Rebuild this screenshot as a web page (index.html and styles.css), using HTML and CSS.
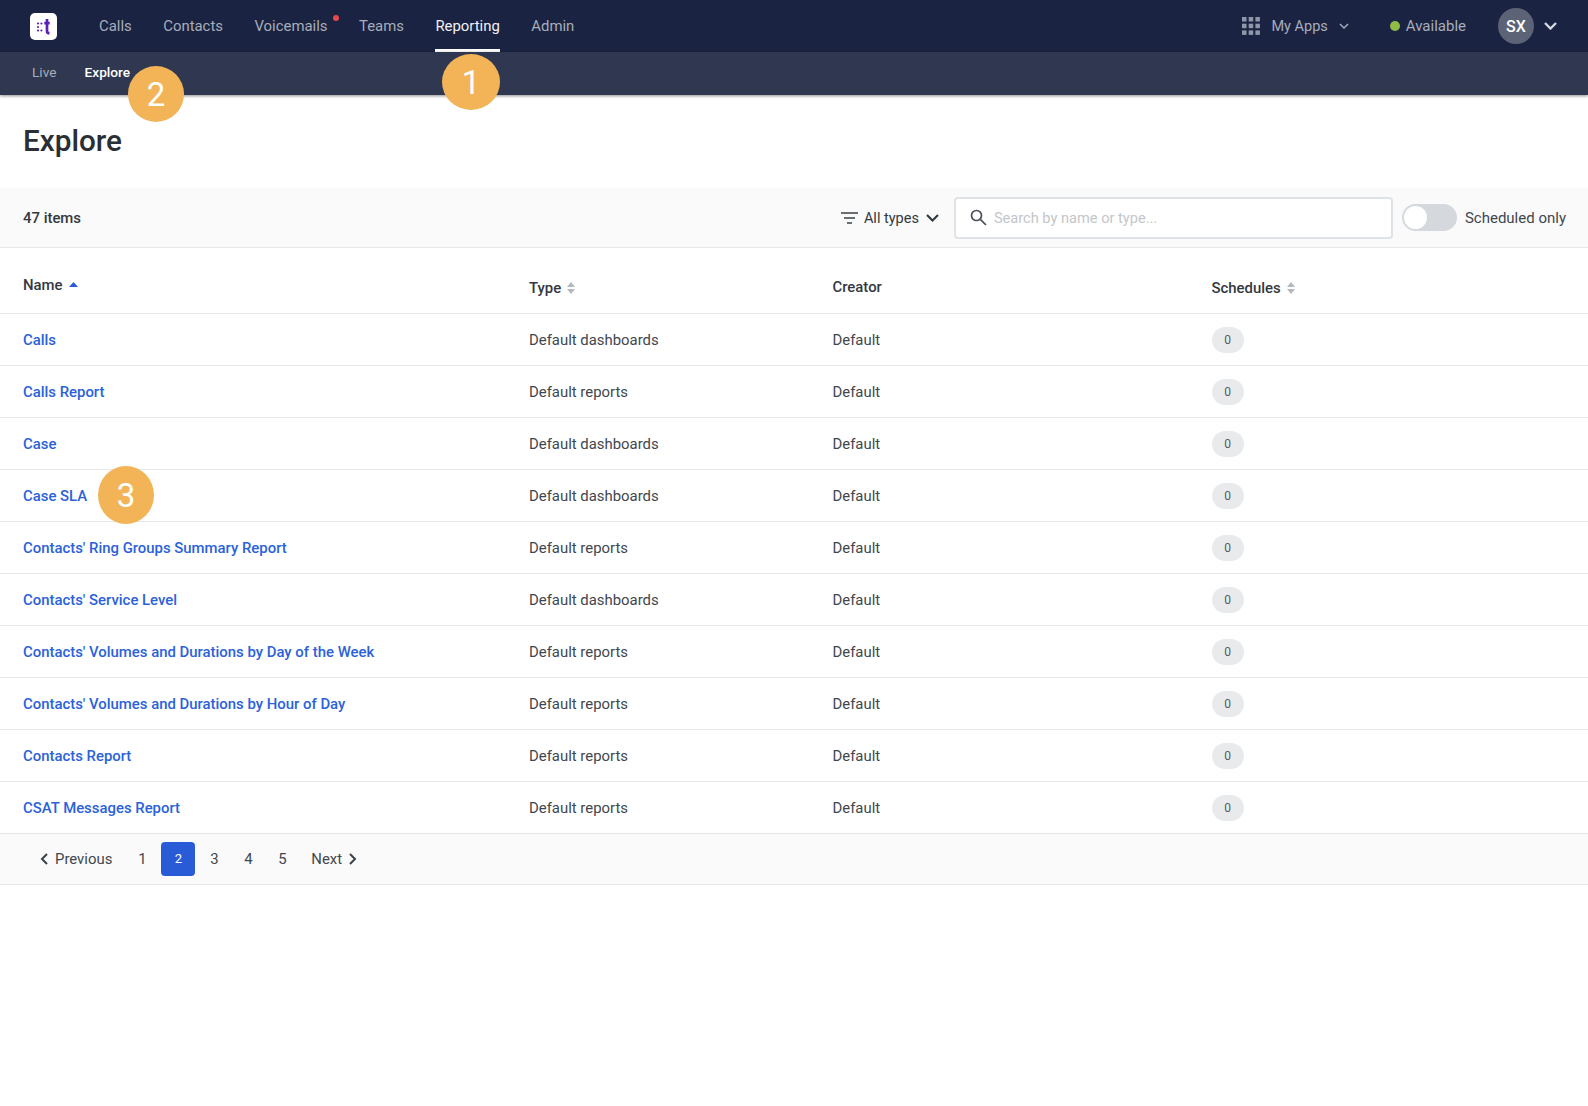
FILE: index.html
```html
<!DOCTYPE html>
<html lang="en">
<head>
<meta charset="utf-8">
<title>Explore</title>
<link rel="stylesheet" href="styles.css">
</head>
<body>
<header class="topbar">
  <div class="logo"><svg width="27" height="27" viewBox="0 0 27 27" aria-hidden="true"><g fill="#5b21b6"><circle cx="8" cy="10.5" r="1.1"/><circle cx="8" cy="14" r="1.1"/><circle cx="8" cy="17.5" r="1.1"/><circle cx="11.4" cy="10.5" r="1.1"/><circle cx="11.4" cy="17.5" r="1.1"/></g><path d="M17 6v12.2q0 2 2.5 2M14.3 10.2h5.4" fill="none" stroke="#5b21b6" stroke-width="2.7"/></svg></div>
  <nav class="mainnav">
    <a>Calls</a><a>Contacts</a><a class="has-dot">Voicemails</a><a>Teams</a><a class="active">Reporting</a><a>Admin</a>
  </nav>
  <div class="top-right">
    <svg class="grid-icon" width="18" height="18" viewBox="0 0 18 18" fill="#8f96a8"><rect x="0" y="0" width="4.5" height="4.5"/><rect x="6.7" y="0" width="4.5" height="4.5"/><rect x="13.4" y="0" width="4.5" height="4.5"/><rect x="0" y="6.7" width="4.5" height="4.5"/><rect x="6.7" y="6.7" width="4.5" height="4.5"/><rect x="13.4" y="6.7" width="4.5" height="4.5"/><rect x="0" y="13.4" width="4.5" height="4.5"/><rect x="6.7" y="13.4" width="4.5" height="4.5"/><rect x="13.4" y="13.4" width="4.5" height="4.5"/></svg>
    <span class="apps">My Apps</span>
    <svg class="apps-chev" width="10" height="6" viewBox="0 0 10 6" fill="none" stroke="#a3a9b8" stroke-width="1.5"><path d="M1 1l4 4 4-4"/></svg>
    <span class="status-dot"></span><span class="status">Available</span>
    <span class="avatar">SX</span>
    <svg class="user-chev" width="13" height="8" viewBox="0 0 13 8" fill="none" stroke="#d5d8df" stroke-width="2.4"><path d="M1 1l5.5 5.5L12 1"/></svg>
  </div>
</header>
<div class="subbar"><a>Live</a><a class="active">Explore</a></div>
<h1 class="title">Explore</h1>
<div class="toolbar">
  <span class="count">47 items</span>
  <div class="tools">
    <svg class="filter-icon" width="17" height="12" viewBox="0 0 17 12" fill="none" stroke="#3b4149" stroke-width="1.6"><path d="M0 1h17M3 6h11M6 11h5"/></svg>
    <span class="filter">All types</span>
    <svg class="filter-chev" width="13" height="8" viewBox="0 0 13 8" fill="none" stroke="#2f353c" stroke-width="2"><path d="M1 1l5.5 5.5L12 1"/></svg>
    <div class="search">
      <svg width="17" height="17" viewBox="0 0 17 17" fill="none" stroke="#4a5058" stroke-width="1.7"><circle cx="6.5" cy="6.5" r="5"/><path d="M10.3 10.3L16 16"/></svg>
      <span class="placeholder">Search by name or type...</span>
    </div>
    <span class="toggle"><span class="knob"></span></span>
    <span class="sched">Scheduled only</span>
  </div>
</div>
<div class="table">
  <div class="row head">
    <div class="c1 name-head">Name <svg width="9" height="5" viewBox="0 0 9 5" fill="#2a5bd7"><path d="M4.5 0L9 5H0z"/></svg></div>
    <div class="c2 low">Type <svg class="sort" width="8" height="12" viewBox="0 0 8 12" fill="#b4b8bd"><path d="M4 0l4 5H0zM4 12L0 7h8z"/></svg></div>
    <div class="c3 creator">Creator</div>
    <div class="c4 low">Schedules <svg class="sort" width="8" height="12" viewBox="0 0 8 12" fill="#b4b8bd"><path d="M4 0l4 5H0zM4 12L0 7h8z"/></svg></div>
  </div>
  <div class="row"><a class="c1">Calls</a><div class="c2">Default dashboards</div><div class="c3">Default</div><div class="c4"><span class="badge">0</span></div></div>
  <div class="row"><a class="c1">Calls Report</a><div class="c2">Default reports</div><div class="c3">Default</div><div class="c4"><span class="badge">0</span></div></div>
  <div class="row"><a class="c1">Case</a><div class="c2">Default dashboards</div><div class="c3">Default</div><div class="c4"><span class="badge">0</span></div></div>
  <div class="row"><a class="c1">Case SLA</a><div class="c2">Default dashboards</div><div class="c3">Default</div><div class="c4"><span class="badge">0</span></div></div>
  <div class="row"><a class="c1">Contacts' Ring Groups Summary Report</a><div class="c2">Default reports</div><div class="c3">Default</div><div class="c4"><span class="badge">0</span></div></div>
  <div class="row"><a class="c1">Contacts' Service Level</a><div class="c2">Default dashboards</div><div class="c3">Default</div><div class="c4"><span class="badge">0</span></div></div>
  <div class="row"><a class="c1">Contacts' Volumes and Durations by Day of the Week</a><div class="c2">Default reports</div><div class="c3">Default</div><div class="c4"><span class="badge">0</span></div></div>
  <div class="row"><a class="c1">Contacts' Volumes and Durations by Hour of Day</a><div class="c2">Default reports</div><div class="c3">Default</div><div class="c4"><span class="badge">0</span></div></div>
  <div class="row"><a class="c1">Contacts Report</a><div class="c2">Default reports</div><div class="c3">Default</div><div class="c4"><span class="badge">0</span></div></div>
  <div class="row"><a class="c1">CSAT Messages Report</a><div class="c2">Default reports</div><div class="c3">Default</div><div class="c4"><span class="badge">0</span></div></div>
</div>
<div class="pager">
  <a class="prev"><svg width="8" height="12" viewBox="0 0 8 12" fill="none" stroke="#3b4149" stroke-width="2"><path d="M7 1L2 6l5 5"/></svg>Previous</a>
  <a class="num">1</a><a class="num current">2</a><a class="num">3</a><a class="num">4</a><a class="num">5</a>
  <a class="next">Next<svg width="8" height="12" viewBox="0 0 8 12" fill="none" stroke="#3b4149" stroke-width="2"><path d="M1 1l5 5-5 5"/></svg></a>
</div>
<span class="marker m1">1</span>
<span class="marker m2">2</span>
<span class="marker m3">3</span>
</body>
</html>
```
FILE: styles.css
```css
* { box-sizing: border-box; }
html, body { margin: 0; padding: 0; }
body {
  position: relative;
  width: 1588px;
  height: 1106px;
  overflow: hidden;
  background: #fff;
  font-family: Roboto, "Liberation Sans", sans-serif;
  font-size: 14.9px;
  color: #41474e;
}
.topbar {
  height: 52px;
  background: #1a2342;
  display: flex;
  align-items: center;
  padding-left: 30px;
}
.logo {
  width: 27px;
  height: 27px;
  background: #fff;
  border-radius: 5px;
  display: flex;
}
.mainnav { display: flex; margin-left: 42px; height: 52px; }
.mainnav a {
  display: flex;
  align-items: center;
  height: 52px;
  margin-right: 31.5px;
  color: #a8adba;
  position: relative;
}
.mainnav a.active { color: #f1f2f5; border-bottom: 3px solid #fff; padding-top: 3px; }
.mainnav a.has-dot::after {
  content: "";
  position: absolute;
  width: 6px;
  height: 6px;
  border-radius: 50%;
  background: #e5484d;
  right: -11px;
  top: 15px;
}
.top-right { margin-left: auto; display: flex; align-items: center; padding-right: 31px; }
.apps { color: #a8adba; margin-left: 11.5px; font-size: 14.5px; }
.apps-chev { margin-left: 11px; }
.status-dot { width: 10px; height: 10px; border-radius: 50%; background: #8fbc45; margin-left: 41px; }
.status { color: #a8adba; margin-left: 6px; font-size: 15px; }
.avatar {
  width: 36px;
  height: 36px;
  border-radius: 50%;
  background: #5c6377;
  color: #fff;
  font-weight: 500;
  font-size: 16px;
  display: flex;
  align-items: center;
  justify-content: center;
  margin-left: 32px;
}
.user-chev { margin-left: 10px; }
.subbar {
  height: 43px;
  background: #2f3751;
  display: flex;
  align-items: center;
  padding: 0 0 4px 32px;
  gap: 28px;
  font-size: 13.7px;
  box-shadow: 0 1px 3px rgba(0, 0, 0, 0.45);
  position: relative;
  color: #a8adba;
}
.subbar a.active { color: #fff; font-weight: 500; }
.title {
  margin: 0;
  height: 93px;
  padding: 28px 0 0 23px;
  font-size: 29.7px;
  line-height: 36px;
  font-weight: 500;
  color: #2a2f36;
}
.toolbar {
  height: 60px;
  background: #fafafa;
  border-bottom: 1px solid #e6e7e9;
  display: flex;
  align-items: center;
  justify-content: space-between;
  padding: 0 22px 0 23px;
}
.count { font-weight: 500; color: #33383f; }
.tools { display: flex; align-items: center; }
.filter { margin-left: 6px; color: #33383f; font-size: 14.5px; padding-top: 1px; }
.filter-chev { margin-left: 7px; }
.search {
  width: 439px;
  height: 42px;
  margin-left: 15px;
  background: #fff;
  border: 2px solid #dfe3e7;
  border-radius: 4px;
  display: flex;
  align-items: center;
  padding-left: 14px;
  gap: 7px;
}
.placeholder { color: #c3c6ca; font-size: 14.6px; }
.toggle {
  width: 55px;
  height: 27px;
  margin-left: 9px;
  border-radius: 14px;
  background: #d5d8dc;
  display: flex;
  align-items: center;
  padding-left: 2px;
}
.knob { width: 23px; height: 23px; border-radius: 50%; background: #fff; }
.sched { margin-left: 8px; font-size: 15px; }
.row {
  height: 52px;
  padding-top: 1px;
  border-bottom: 1px solid #e6e7e9;
  display: flex;
  align-items: center;
  padding-left: 23px;
}
.row.head { height: 65.5px; padding-top: 15px; font-weight: 500; color: #33383f; }
.c1 { width: 506px; }
.c2 { width: 303.5px; }
.c3 { width: 379px; }
.creator { padding-bottom: 2px; }
a.c1 { color: #2b62da; font-weight: 500; }
.name-head { display: flex; align-items: center; gap: 6px; padding-bottom: 6px; }
.low { display: flex; align-items: center; gap: 6px; }
.badge {
  display: flex;
  align-items: center;
  justify-content: center;
  width: 32px;
  height: 26px;
  border-radius: 13px;
  background: #e9eaec;
  font-size: 12px;
  color: #565b62;
}
.pager {
  height: 51px;
  background: #fafafa;
  border-bottom: 1px solid #e6e7e9;
  display: flex;
  align-items: center;
  padding-left: 40px;
}
.prev, .next { display: flex; align-items: center; gap: 7px; }
.prev { margin-right: 13px; }
.num { width: 34px; height: 34px; display: flex; align-items: center; justify-content: center; }
.num.current { background: #2a5bd7; color: #fff; border-radius: 4px; font-size: 13px; margin: 0 2px; }
.next { margin-left: 12px; }
.marker {
  position: absolute;
  border-radius: 50%;
  background: #f2b457;
  color: #fff;
  font-size: 33px;
  display: flex;
  align-items: center;
  justify-content: center;
}
.m1 { left: 442px; top: 54px; width: 58px; height: 56px; }
.m2 { left: 128px; top: 66px; width: 56px; height: 56px; }
.m3 { left: 98px; top: 466px; width: 56px; height: 58px; }
```
